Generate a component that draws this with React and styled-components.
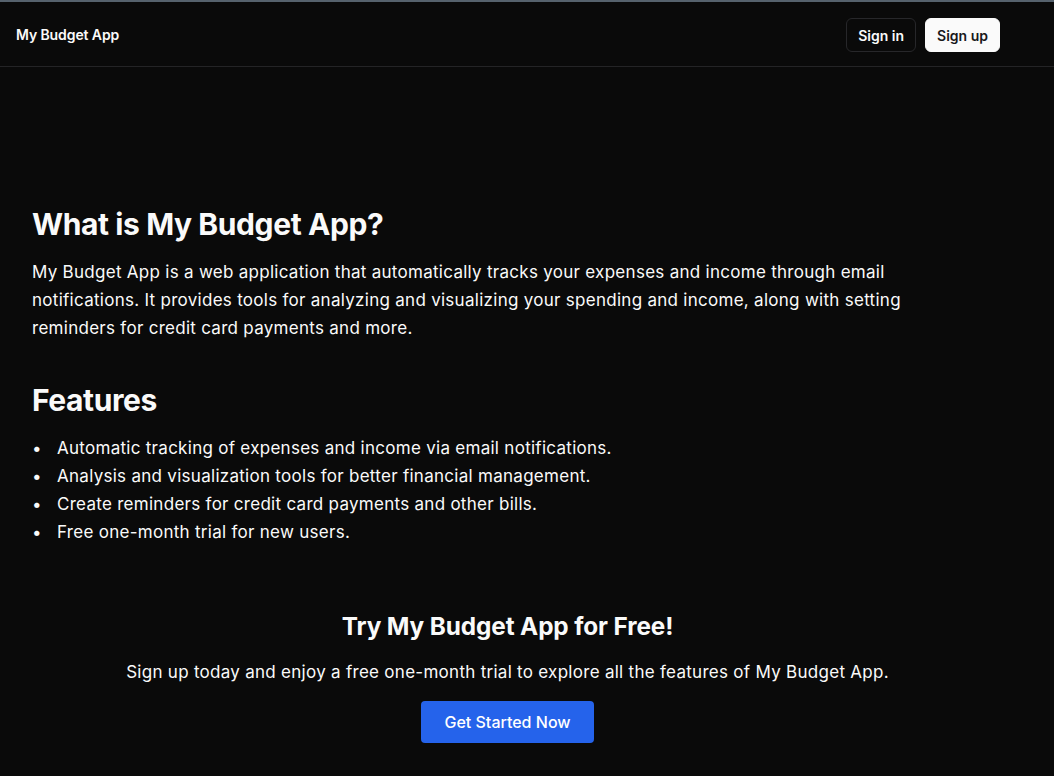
import React from 'react';
import styled, { createGlobalStyle } from 'styled-components';

const GlobalStyle = createGlobalStyle`
  body {
    margin: 0;
    background: #0a0a0a;
    color: #fafafa;
    font-family: Inter, "Noto Sans", sans-serif;
  }
`;

const Page = styled.div`
  min-height: 776px;
  background: #0a0a0a;
  border-top: 2px solid #56626d;
`;

const Header = styled.header`
  height: 64px;
  border-bottom: 1px solid #242426;
  display: flex;
  align-items: center;
  justify-content: space-between;
  padding: 0 54px 0 16px;
`;

const Brand = styled.div`
  font-size: 14px;
  font-weight: 600;
  letter-spacing: -0.1px;
`;

const Nav = styled.div`
  display: flex;
  gap: 9px;
`;

const NavButton = styled.button`
  height: 34px;
  margin-top: 2px;
  padding: 0 11px;
  border-radius: 6px;
  font-family: inherit;
  font-size: 14px;
  font-weight: 600;
  border: 1px solid ${(p) => (p.$primary ? '#fafafa' : '#27272a')};
  background: ${(p) => (p.$primary ? '#fafafa' : '#0a0a0a')};
  color: ${(p) => (p.$primary ? '#18181b' : '#fafafa')};
`;

const Main = styled.main`
  width: 983px;
  padding: 139px 16px 0;
  box-sizing: border-box;
  margin-left: 16px;
`;

const Section = styled.section`
  margin-bottom: 40px;
`;

const Title = styled.h2`
  font-size: 30px;
  font-weight: 700;
  letter-spacing: -0.4px;
  line-height: 36px;
  margin: 0 0 16px;
`;

const Text = styled.p`
  font-size: 17px;
  line-height: 28px;
  margin: 0;
  max-width: 900px;
  letter-spacing: 0.28px;
`;

const List = styled.ul`
  margin: 0;
  padding: 0;
  list-style: none;
  font-size: 17px;
  line-height: 28px;
  letter-spacing: 0.28px;
`;

const Item = styled.li`
  display: flex;

  &::before {
    content: '•';
    width: 25px;
    flex: none;
  }
`;

const Cta = styled.section`
  display: flex;
  flex-direction: column;
  align-items: center;
  text-align: center;
  padding-top: 24px;
`;

const CtaTitle = styled.h3`
  font-size: 24.3px;
  font-weight: 700;
  letter-spacing: -0.1px;
  margin: 0 0 16px;
  line-height: 32px;
`;

const CtaButton = styled.button`
  margin-top: 15px;
  height: 42px;
  padding: 0 23px;
  border: none;
  border-radius: 4px;
  background: #2563eb;
  color: #fff;
  font-family: inherit;
  font-size: 16px;
  font-weight: 500;
`;

const features = [
  'Automatic tracking of expenses and income via email notifications.',
  'Analysis and visualization tools for better financial management.',
  'Create reminders for credit card payments and other bills.',
  'Free one-month trial for new users.',
];

export default function App() {
  return (
    <Page>
      <GlobalStyle />
      <Header>
        <Brand>My Budget App</Brand>
        <Nav>
          <NavButton>Sign in</NavButton>
          <NavButton $primary>Sign up</NavButton>
        </Nav>
      </Header>
      <Main>
        <Section>
          <Title>What is My Budget App?</Title>
          <Text>
            My Budget App is a web application that automatically tracks your expenses and income
            through email notifications. It provides tools for analyzing and visualizing your
            spending and income, along with setting reminders for credit card payments and more.
          </Text>
        </Section>
        <Section>
          <Title>Features</Title>
          <List>
            {features.map((f) => (
              <Item key={f}>{f}</Item>
            ))}
          </List>
        </Section>
        <Cta>
          <CtaTitle>Try My Budget App for Free!</CtaTitle>
          <Text>
            Sign up today and enjoy a free one-month trial to explore all the features of My Budget
            App.
          </Text>
          <CtaButton>Get Started Now</CtaButton>
        </Cta>
      </Main>
    </Page>
  );
}
